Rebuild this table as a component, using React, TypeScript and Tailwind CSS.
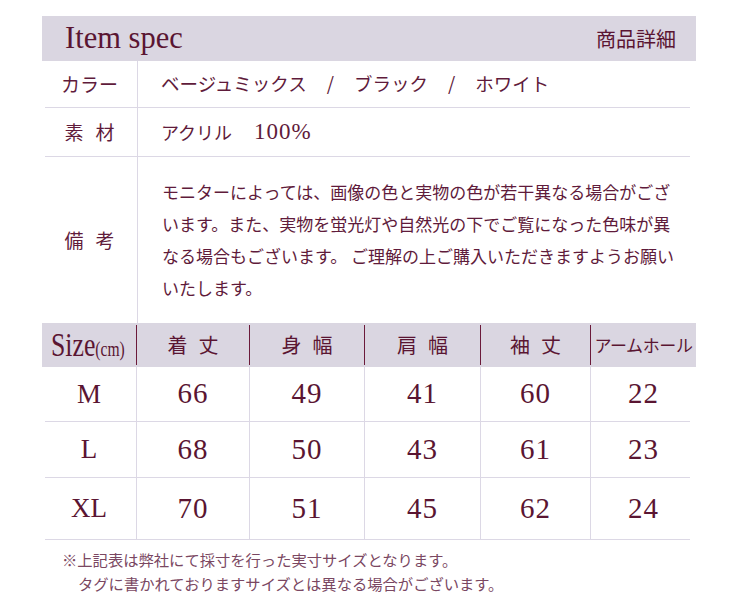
import React from "react";

const JP = "font-['Noto_Sans_CJK_JP',sans-serif]";
const SERIF = "font-['Liberation_Serif','Noto_Serif_CJK_JP',serif]";

const Sep = () => <div className="h-px bg-[#dcd8e5] ml-[3px] mr-[6px]" />;

const headers: [string, string][] = [
  ["着", "丈"],
  ["身", "幅"],
  ["肩", "幅"],
  ["袖", "丈"],
];

const rows: { size: string; vals: string[]; h: string }[] = [
  { size: "M", vals: ["66", "49", "41", "60", "22"], h: "h-[54px]" },
  { size: "L", vals: ["68", "50", "43", "61", "23"], h: "h-[55px]" },
  { size: "XL", vals: ["70", "51", "45", "62", "24"], h: "h-[61px]" },
];

export default function App() {
  return (
    <div className="w-[730px] h-[611px] bg-white text-[#5f1b3b]">
      <div className="ml-[42px] pt-[16px] w-[654px]">
        {/* Item spec header */}
        <div className="h-[45px] bg-[#dad6e1] flex items-center justify-between pl-[23px] pr-[20px]">
          <span className={`${SERIF} text-[30.5px] leading-none text-[#5a1532]`}>Item spec</span>
          <span className={`${JP} text-[20px] leading-none text-[#5a1532]`}>商品詳細</span>
        </div>

        {/* spec rows */}
        <div className={`${JP} flex h-[46px]`}>
          <div className="w-[96px] border-r border-[#dcd8e5] flex items-center justify-center text-[19px]">
            カラー
          </div>
          <div className="flex-1 flex items-center pl-[23px] text-[18.5px]">
            <span>ベージュミックス</span>
            <span className="mx-[20px]">/</span>
            <span>ブラック</span>
            <span className="mx-[20px]">/</span>
            <span>ホワイト</span>
          </div>
        </div>
        <Sep />
        <div className={`${JP} flex h-[48px]`}>
          <div className="w-[96px] border-r border-[#dcd8e5] flex items-center justify-center text-[19px] gap-[12px]">
            <span>素</span>
            <span>材</span>
          </div>
          <div className="flex-1 flex items-center pl-[23px] text-[18px]">
            <span>アクリル</span>
            <span className={`${SERIF} text-[23px] ml-[22px] tracking-[1px]`}>100%</span>
          </div>
        </div>
        <Sep />
        <div className={`${JP} flex h-[166px]`}>
          <div className="w-[96px] border-r border-[#dcd8e5] flex items-center justify-center text-[19px] gap-[12px]">
            <span>備</span>
            <span>考</span>
          </div>
          <div className="flex-1 flex items-center pl-[24px] text-[17px] leading-[32px] whitespace-nowrap">
            <div>
              モニターによっては、画像の色と実物の色が若干異なる場合がござ
              <br />
              います。また、実物を蛍光灯や自然光の下でご覧になった色味が異
              <br />
              なる場合もございます。 ご理解の上ご購入いただきますようお願い
              <br />
              いたします。
            </div>
          </div>
        </div>

        {/* size header */}
        <div className="grid grid-cols-[95px_113px_115px_116px_110px_105px] h-[44px] bg-[#dad6e1] items-center">
          <div className="h-[40px] border-r border-[#6b1a3a] flex items-center pl-[9px] overflow-visible">
            <span className={`${SERIF} inline-block scale-x-[0.78] origin-left whitespace-nowrap text-[#5a1532] leading-none`}>
              <span className="text-[33px]">Size</span>
              <span className="text-[20px]">(cm)</span>
            </span>
          </div>
          {headers.map(([a, b], i) => (
            <div
              key={i}
              className={`${JP} h-[40px] border-r border-[#6b1a3a] flex items-center justify-center gap-[11px] text-[20px] text-[#5a1532]`}
            >
              <span>{a}</span>
              <span>{b}</span>
            </div>
          ))}
          <div className={`${JP} h-[40px] flex items-center justify-center text-[17px] tracking-[-0.4px] text-[#5a1532] whitespace-nowrap`}>
            アームホール
          </div>
        </div>

        {/* size rows */}
        {rows.map((r, ri) => (
          <React.Fragment key={r.size}>
            {ri > 0 && <Sep />}
            <div className={`grid grid-cols-[95px_113px_115px_116px_110px_105px] ${r.h}`}>
              <div className={`${SERIF} text-[27px] flex items-center justify-center border-r border-[#dcd8e5] text-[#5a1532]`}>
                {r.size}
              </div>
              {r.vals.map((v, vi) => (
                <div
                  key={vi}
                  className={`${SERIF} text-[29px] tracking-[1px] flex items-center justify-center text-[#5a1532] ${
                    vi < 4 ? "border-r border-[#dcd8e5]" : ""
                  }`}
                >
                  {v}
                </div>
              ))}
            </div>
          </React.Fragment>
        ))}
        <Sep />

        {/* notes */}
        <div className={`${JP} mt-[7px] text-[15.3px] leading-[24px] text-[#7a4762]`}>
          <div className="pl-[20px]">※上記表は弊社にて採寸を行った実寸サイズとなります。</div>
          <div className="pl-[36px]">タグに書かれておりますサイズとは異なる場合がございます。</div>
        </div>
      </div>
    </div>
  );
}
